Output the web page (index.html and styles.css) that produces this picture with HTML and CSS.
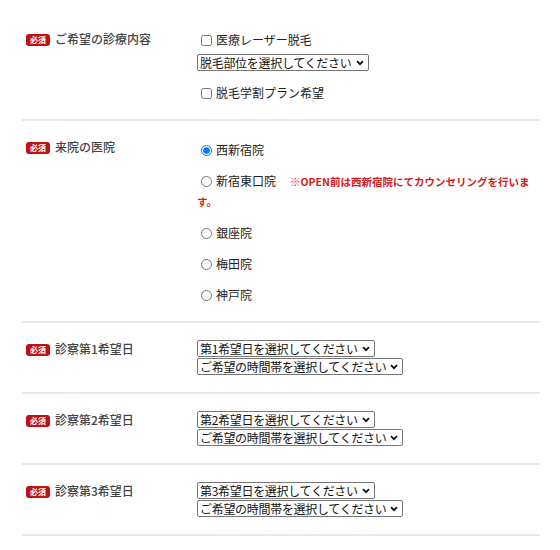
FILE: index.html
```html
<!DOCTYPE html>
<html lang="ja">
  <head>
    <meta charset="UTF-8" />
    <meta name="viewport" content="width=device-width, initial-scale=1.0" />
    <title>ご予約フォーム</title>
    <link rel="stylesheet" href="styles.css">
  </head>
  <body>
    <form class="reserve-form">
      <!-- 診療内容 -->
      <div class="row">
        <div class="row-label"><span class="required">必須</span>ご希望の診療内容</div>
        <div class="row-body">
          <label class="opt"><input type="checkbox" name="menu" />医療レーザー脱毛</label>
          <select class="sel sel-part">
            <option>脱毛部位を選択してください</option>
          </select>
          <label class="opt"><input type="checkbox" name="student" />脱毛学割プラン希望</label>
        </div>
      </div>

      <!-- 来院の医院 -->
      <div class="row">
        <div class="row-label"><span class="required">必須</span>来院の医院</div>
        <div class="row-body radios">
          <label class="opt"><input type="radio" name="clinic" checked />西新宿院</label>
          <label class="opt"><input type="radio" name="clinic" />新宿東口院<span class="note">※OPEN前は西新宿院にてカウンセリングを行います。</span></label>
          <label class="opt"><input type="radio" name="clinic" />銀座院</label>
          <label class="opt"><input type="radio" name="clinic" />梅田院</label>
          <label class="opt"><input type="radio" name="clinic" />神戸院</label>
        </div>
      </div>

      <!-- 希望日 -->
      <div class="row">
        <div class="row-label"><span class="required">必須</span>診察第1希望日</div>
        <div class="row-body">
          <select class="sel sel-date"><option>第1希望日を選択してください</option></select>
          <select class="sel sel-time"><option>ご希望の時間帯を選択してください</option></select>
        </div>
      </div>
      <div class="row">
        <div class="row-label"><span class="required">必須</span>診察第2希望日</div>
        <div class="row-body">
          <select class="sel sel-date"><option>第2希望日を選択してください</option></select>
          <select class="sel sel-time"><option>ご希望の時間帯を選択してください</option></select>
        </div>
      </div>
      <div class="row">
        <div class="row-label"><span class="required">必須</span>診察第3希望日</div>
        <div class="row-body">
          <select class="sel sel-date"><option>第3希望日を選択してください</option></select>
          <select class="sel sel-time"><option>ご希望の時間帯を選択してください</option></select>
        </div>
      </div>
    </form>
  </body>
</html>
```

FILE: styles.css
```css
body {
  margin: 0;
  padding: 13px 0 0;
  font-family: "Noto Sans CJK JP", "Noto Sans", sans-serif;
  font-size: 12px;
  color: #333;
  background: #fff;
}
.reserve-form {
  width: 518px;
  margin-left: 22px;
}
.row {
  display: flex;
  padding: 17px 0;
  border-bottom: 2px solid #e8e8e8;
}
.row-label {
  width: 175px;
  padding-left: 4px;
  box-sizing: border-box;
  line-height: 17px;
  font-weight: 500;
  color: #444;
}
.required {
  display: inline-block;
  width: 24px;
  height: 12px;
  line-height: 12px;
  margin-right: 5px;
  border-radius: 3px;
  background: #bf1111;
  color: #fff;
  font-size: 8px;
  font-weight: bold;
  text-align: center;
  vertical-align: 1px;
}
.row-body {
  flex: 1;
  padding-right: 10px;
}
.opt {
  display: block;
  line-height: 19px;
  color: #222;
}
.opt input {
  margin: 0 4px 0 4px;
  width: 11px;
  height: 11px;
  vertical-align: -1px;
}
.row-body .sel + .opt {
  margin-top: 12px;
}
.row-body .opt + .sel {
  margin-top: 5px;
}
.sel {
  display: block;
  box-sizing: border-box;
  height: 17px;
  padding: 0 0 0 2px;
  font-family: inherit;
  font-size: 12px;
  line-height: 15px;
  letter-spacing: -0.3px;
  color: #111;
  border: 1px solid #767676;
  border-radius: 2px;
  background: #fff url("data:image/svg+xml,%3Csvg xmlns='http://www.w3.org/2000/svg' width='8' height='6' viewBox='0 0 8 6'%3E%3Cpath d='M1 1.2 L4 4.2 L7 1.2' fill='none' stroke='%23111' stroke-width='1.8'/%3E%3C/svg%3E") no-repeat right 4px center;
  -webkit-appearance: none;
  appearance: none;
}
.sel + .sel {
  margin-top: 1px;
}
.sel-part {
  width: 172px;
}
.sel-date {
  width: 178px;
}
.sel-time {
  width: 206px;
}
.radios {
  padding-top: 2px;
}
.radios .opt {
  margin-bottom: 12px;
}
.radios .opt:last-child {
  margin-bottom: 0;
}
.note {
  margin-left: 14px;
  font-size: 10.5px;
  font-weight: bold;
  color: #d11a1a;
}
```
